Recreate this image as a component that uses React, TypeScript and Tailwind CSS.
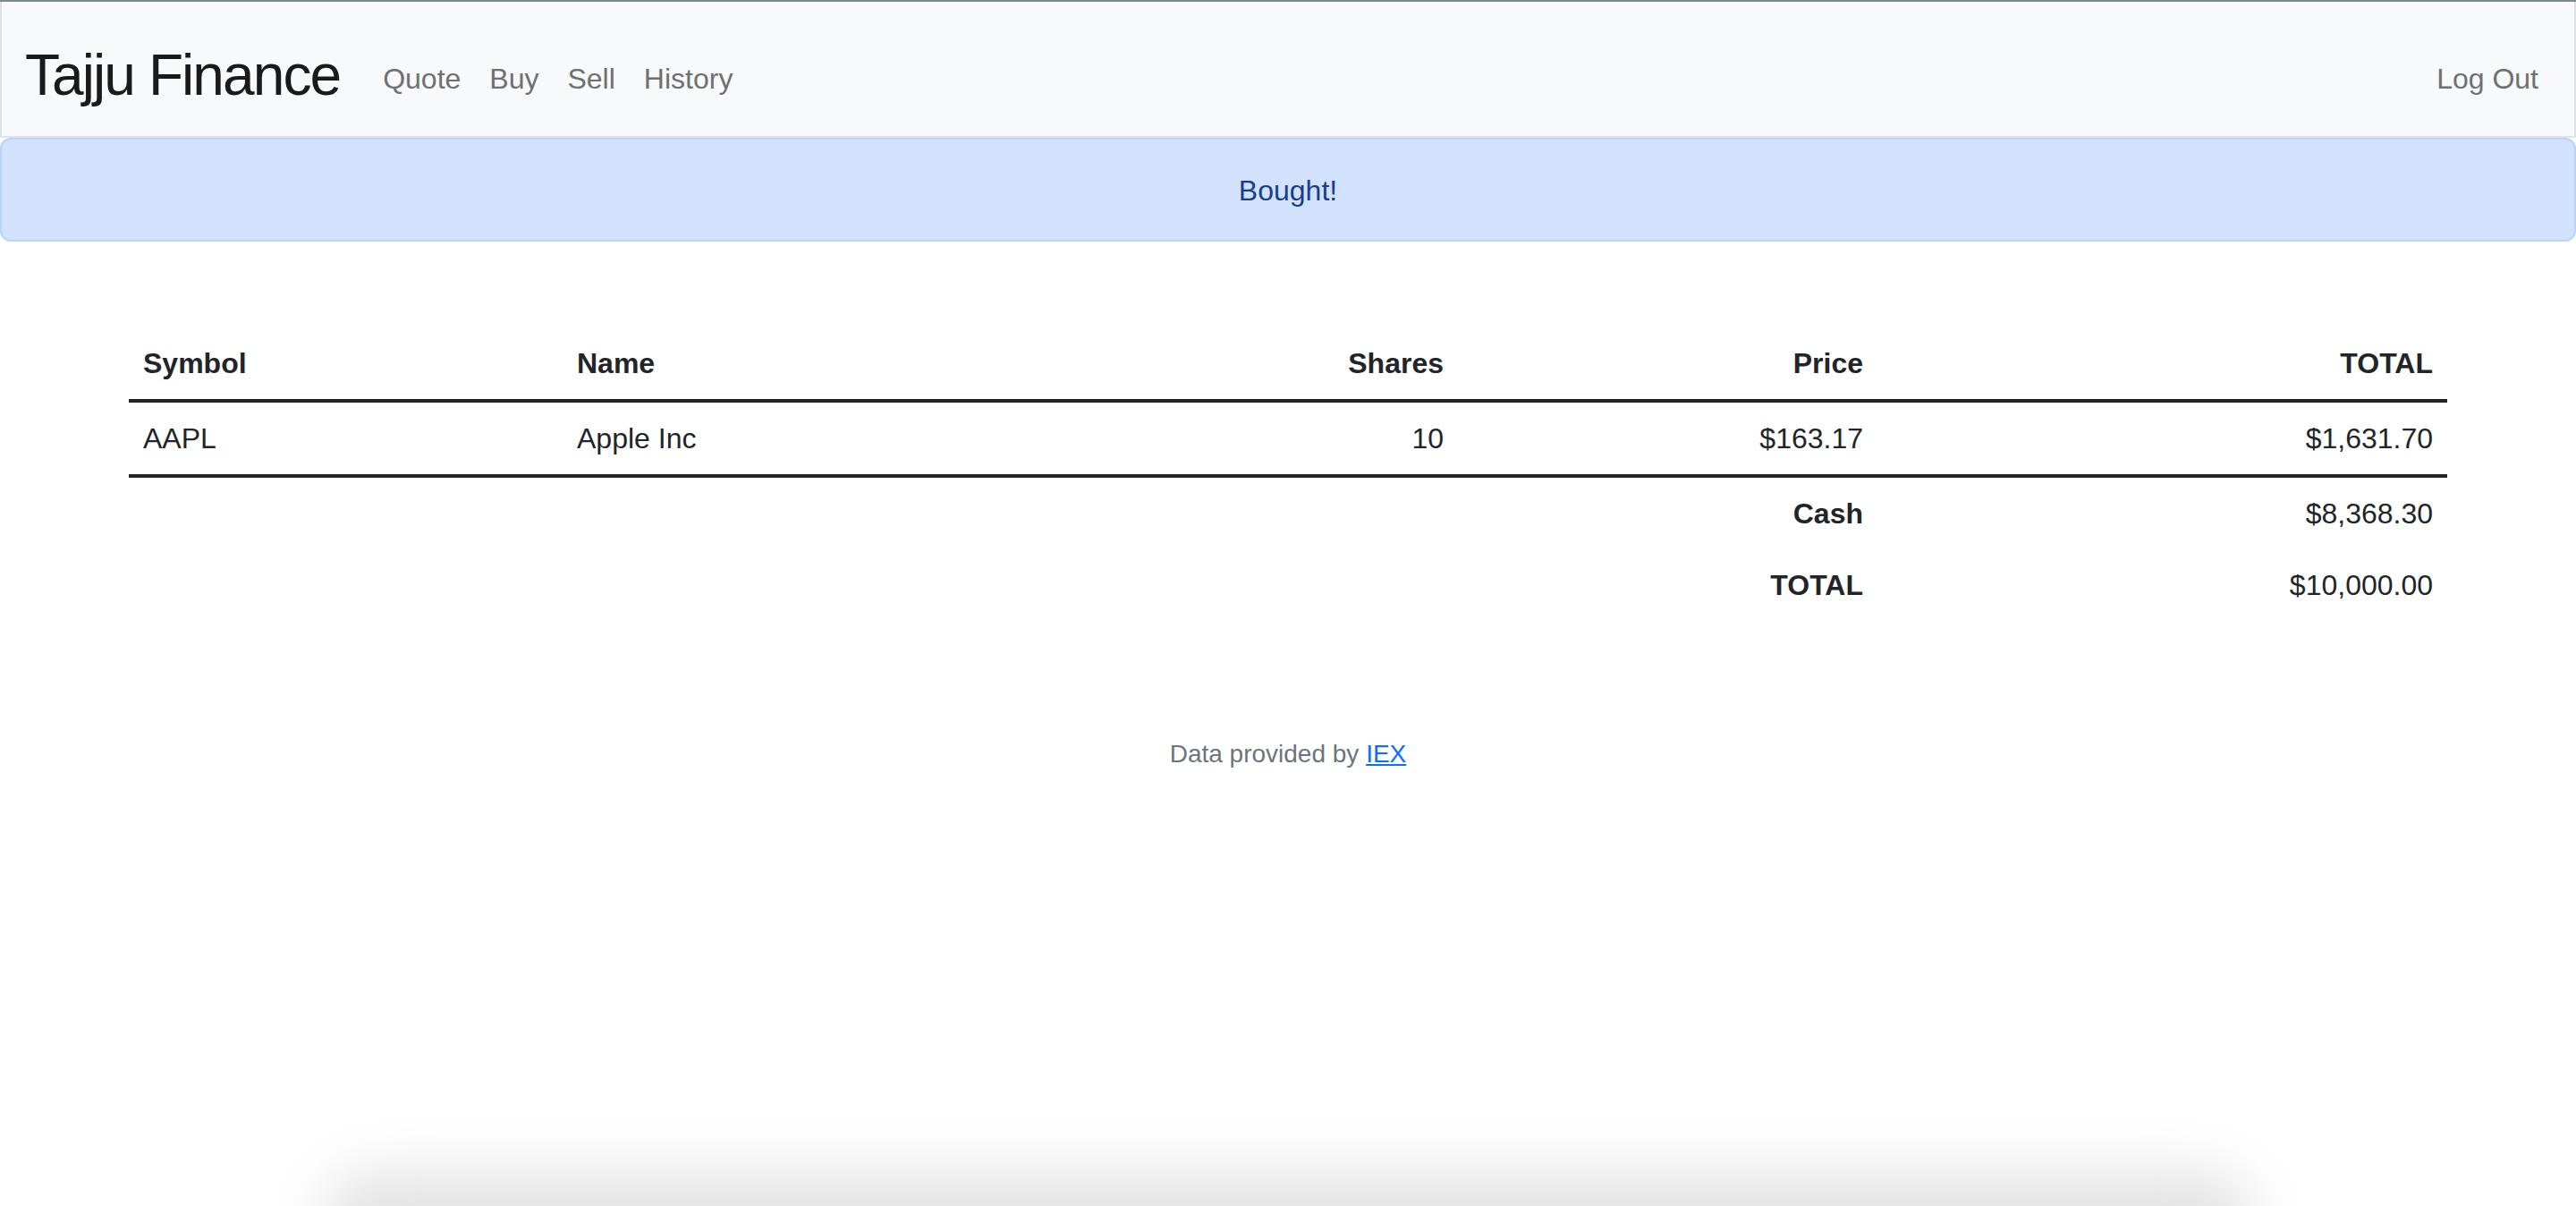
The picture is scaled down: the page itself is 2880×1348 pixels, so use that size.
const font = { fontFamily: '"Liberation Sans", Arial, sans-serif' };

const holdings = [{ symbol: "AAPL", name: "Apple Inc", shares: 10, price: "$163.17", total: "$1,631.70" }];

const App = () => {
    return (
        <div className="relative min-h-screen w-full overflow-hidden bg-white text-[#212529]" style={font}>
            <div className="h-[2px] w-full bg-[#7d8790]" />

            <nav className="h-[152px] w-full bg-[#f8f9fa] border-x-2 border-b-2 border-[#dee2e6] px-[24px] pt-[14px] flex items-center">
                <a className="text-[64px] leading-[1.5] tracking-[-0.03em] text-[#1a1a1a] py-[10px] mr-[32px] pl-[2px]">Tajju Finance</a>
                <ul className="mt-[8px] flex text-[32px] leading-[1.5] text-[#6f7071]">
                    <li className="px-[16px]">Quote</li>
                    <li className="px-[16px]">Buy</li>
                    <li className="px-[16px]">Sell</li>
                    <li className="px-[16px]">History</li>
                </ul>
                <ul className="mt-[8px] ml-auto flex text-[32px] leading-[1.5] text-[#6f7071]">
                    <li className="px-[16px]">Log Out</li>
                </ul>
            </nav>

            <header>
                <div className="border-2 border-[#b9d4fc] bg-[#d2e2fc] rounded-[12px] pt-[33px] pb-[31px] px-[32px] text-center text-[32px] leading-[1.5] text-[#173f8e]">
                    Bought!
                </div>
            </header>

            <main className="pt-[96px] pb-[96px] text-center">
                <div className="w-[2640px] mx-auto px-[24px]">
                    <table className="w-[2592px] table-fixed border-collapse text-[32px] leading-[1.5] mb-[32px]">
                        <thead>
                            <tr className="border-b-4 border-[#212529]">
                                <th className="w-[485px] p-[16px] text-left font-bold">Symbol</th>
                                <th className="w-[500px] p-[16px] text-left font-bold">Name</th>
                                <th className="w-[501px] p-[16px] text-right font-bold">Shares</th>
                                <th className="w-[469px] p-[16px] text-right font-bold">Price</th>
                                <th className="w-[637px] p-[16px] text-right font-bold">TOTAL</th>
                            </tr>
                        </thead>
                        <tbody className="border-b-4 border-[#212529]">
                            {holdings.map((h) => (
                                <tr key={h.symbol}>
                                    <td className="p-[16px] text-left">{h.symbol}</td>
                                    <td className="p-[16px] text-left">{h.name}</td>
                                    <td className="p-[16px] text-right">{h.shares}</td>
                                    <td className="p-[16px] text-right">{h.price}</td>
                                    <td className="p-[16px] text-right">{h.total}</td>
                                </tr>
                            ))}
                        </tbody>
                        <tfoot>
                            <tr>
                                <td className="p-[16px]" colSpan={3}></td>
                                <td className="p-[16px] text-right font-bold">Cash</td>
                                <td className="p-[16px] text-right">$8,368.30</td>
                            </tr>
                            <tr>
                                <td className="p-[16px]" colSpan={3}></td>
                                <td className="p-[16px] text-right font-bold">TOTAL</td>
                                <td className="p-[16px] text-right">$10,000.00</td>
                            </tr>
                        </tfoot>
                    </table>
                </div>
            </main>

            <footer className="text-center text-[28px] leading-[1.5] text-[#6c757d]">
                Data provided by <a className="text-[#0d6efd] underline">IEX</a>
            </footer>

            {/* window shadow peeking in at the bottom */}
            <div className="pointer-events-none absolute left-[360px] right-[360px] bottom-[-90px] h-[130px] rounded-[60px] bg-[#e4e4e4] blur-[30px]" />
        </div>
    );
};

export default App;
